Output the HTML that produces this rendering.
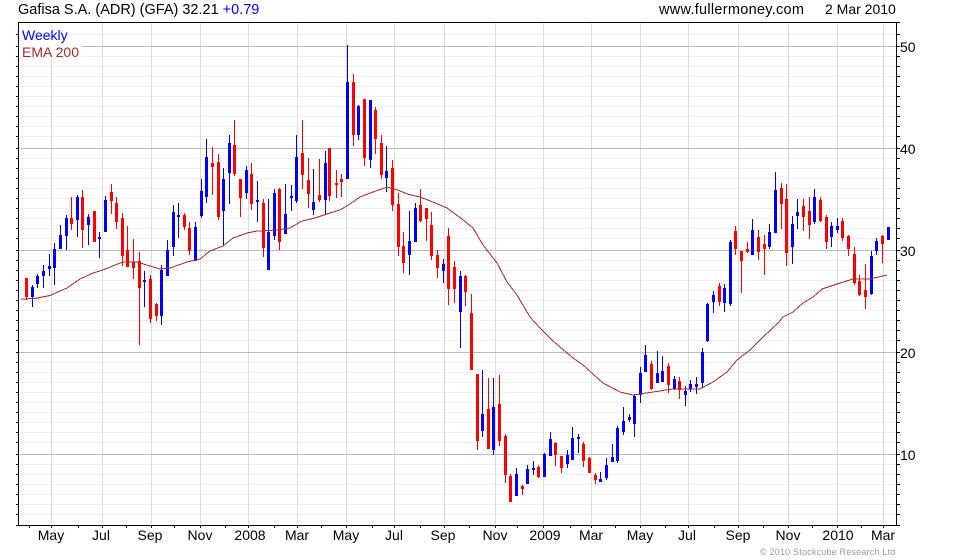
<!DOCTYPE html>
<html><head><meta charset="utf-8"><title>Gafisa S.A. (ADR) (GFA)</title>
<style>html,body{margin:0;padding:0;background:#fff;width:980px;height:560px;overflow:hidden}svg{display:block}text{font-family:"Liberation Sans",Arial,sans-serif;font-size:14px;fill:#000}</style></head>
<body>
<svg width="980" height="560" viewBox="0 0 980 560" xmlns="http://www.w3.org/2000/svg">
<g shape-rendering="crispEdges" fill="none">
<path stroke="#f0f0f0" d="M19 34.500H896M19 56.500H896M19 66.500H896M19 76.500H896M19 86.500H896M19 96.500H896M19 106.500H896M19 116.500H896M19 126.500H896M19 136.500H896M19 158.500H896M19 168.500H896M19 178.500H896M19 188.500H896M19 198.500H896M19 208.500H896M19 218.500H896M19 228.500H896M19 238.500H896M19 260.500H896M19 270.500H896M19 280.500H896M19 290.500H896M19 300.500H896M19 310.500H896M19 320.500H896M19 330.500H896M19 340.500H896M19 362.500H896M19 372.500H896M19 382.500H896M19 392.500H896M19 402.500H896M19 412.500H896M19 422.500H896M19 432.500H896M19 442.500H896M19 464.500H896M19 474.500H896M19 484.500H896M19 494.500H896M19 504.500H896M19 514.500H896"/>
<path stroke="#dcdcdc" d="M51.500 23V525M102.500 23V525M151.500 23V525M200.500 23V525M248.500 23V525M297.500 23V525M346.500 23V525M394.500 23V525M444.500 23V525M495.500 23V525M543.500 23V525M591.500 23V525M640.500 23V525M688.500 23V525M738.500 23V525M788.500 23V525M837.500 23V525M883.500 23V525"/>
<path stroke="#bbbbbb" d="M19 46.500H896M19 148.500H896M19 250.500H896M19 352.500H896M19 454.500H896"/>
<rect x="20" y="28" width="49" height="15" fill="#fff"/>
<rect x="20" y="43" width="62" height="17" fill="#fff"/>
<!-- red wicks -->
<path stroke="#ff0000" d="M26.500 278V300M71.500 197V230M82.500 190V248M111.500 184V214M116.500 197V229M122.500 213V266M127.500 226V267M133.500 239V279M139.500 252V345M150.500 275V323M156.500 303V321M184.500 213V230M189.500 222V255M212.500 147V195M218.500 154V220M234.500 120V176M240.500 179V217M251.500 163V210M263.500 199V257M279.500 188V250M302.500 120V189M308.500 158V208M319.500 159V202M329.500 148V201M336.500 170V198M341.500 174V197M353.500 74V146M364.500 99V166M375.500 107V154M381.500 135V179M392.500 160V211M398.500 193V256M403.500 232V273M420.500 189V222M426.500 208V241M431.500 212V260M437.500 250V278M448.500 228V305M454.500 261V303M465.500 275V306M471.500 294V370M477.500 374V450M488.500 378V449M499.500 375V446M505.500 434V483M510.500 474V502M522.500 485V495M538.500 465V478M555.500 442V466M561.500 456V473M583.500 442V467M589.500 457V473M595.500 473V484M651.500 361V390M668.500 363V393M679.500 377V399M719.500 283V306M735.500 226V255M741.500 251V293M747.500 242V253M758.500 230V260M764.500 235V275M781.500 183V229M786.500 184V266M803.500 199V231M809.500 197V239M820.500 197V222M826.500 215V249M842.500 218V241M848.500 235V256M854.500 247V285M859.500 275V296M865.500 264V309M882.500 235V263"/>
<!-- red bodies -->
<path stroke="#ff0000" stroke-width="3" d="M26.500 278V297M71.500 218V224M82.500 197V230M94.500 211V242M111.500 192V201M116.500 203V222M122.500 218V256M127.500 250V267M133.500 262V268M139.500 261V288M150.500 279V319M156.500 304V316M184.500 215V227M189.500 228V251M212.500 163V167M218.500 162V217M234.500 145V174M240.500 179V198M251.500 174V204M263.500 203V248M279.500 189V242M302.500 153V175M308.500 180V194M319.500 195V200M329.500 148V196M336.500 183V185M341.500 179V182M353.500 82V135M364.500 99V158M375.500 110V139M381.500 143V175M392.500 168V205M398.500 204V247M403.500 246V263M420.500 205V221M426.500 208V219M431.500 225V256M437.500 255V268M448.500 236V289M454.500 267V289M465.500 276V292M471.500 313V370M477.500 374V441M488.500 409V449M499.500 404V441M505.500 436V475M510.500 476V502M522.500 486V489M538.500 467V477M555.500 443V455M561.500 456V468M583.500 444V461M589.500 458V473M595.500 475V480M651.500 364V389M668.500 366V385M679.500 381V390M719.500 286V302M735.500 231V249M741.500 251V261M747.500 249V252M758.500 237V252M764.500 244V249M781.500 188V204M786.500 199V253M803.500 206V217M809.500 211V225M820.500 200V221M826.500 217V242M842.500 221V238M848.500 236V249M854.500 254V283M859.500 281V295M865.500 290V297M882.500 236V244"/>
<!-- blue wicks -->
<path stroke="#0000ff" d="M32.500 285V307M37.500 274V288M43.500 265V288M49.500 254V276M54.500 243V285M60.500 225V249M66.500 215V250M77.500 195V237M88.500 214V245M99.500 232V258M105.500 196V232M144.500 271V307M161.500 265V325M167.500 240V276M173.500 205V256M178.500 203V238M195.500 222V261M201.500 179V218M206.500 139V203M223.500 168V246M229.500 135V204M246.500 166V199M257.500 181V222M268.500 199V270M274.500 189V240M285.500 184V234M291.500 185V211M296.500 135V203M313.500 169V215M325.500 151V215M347.500 45V179M358.500 105V140M370.500 100V168M386.500 146V192M409.500 211V275M415.500 203V242M443.500 259V283M460.500 271V348M482.500 370V437M493.500 378V455M516.500 468V496M527.500 465V484M533.500 461V475M544.500 453V477M550.500 432V456M567.500 450V468M572.500 427V460M578.500 434V453M600.500 472V482M606.500 458V480M612.500 444V462M617.500 426V463M623.500 407V435M629.500 414V422M634.500 395V437M640.500 367V403M645.500 345V372M657.500 351V383M662.500 356V382M674.500 376V390M685.500 386V406M690.500 380V392M696.500 377V394M702.500 348V388M707.500 303V342M713.500 291V313M724.500 284V312M730.500 240V306M752.500 219V255M769.500 224V249M775.500 172V233M792.500 216V264M797.500 199V229M814.500 189V224M831.500 222V247M837.500 218V233M871.500 251V295M876.500 238V255"/>
<!-- blue bodies -->
<path stroke="#0000ff" stroke-width="3" d="M32.500 287V297M37.500 276V284M43.500 271V276M49.500 266V269M54.500 249V268M60.500 235V249M66.500 218V236M77.500 197V220M88.500 217V225M99.500 237V239M105.500 200V232M144.500 280V282M161.500 270V316M167.500 250V276M173.500 212V247M178.500 215V217M195.500 227V261M201.500 191V216M206.500 157V197M223.500 179V211M229.500 143V173M246.500 170V193M257.500 200V202M268.500 232V270M274.500 193V236M285.500 214V234M291.500 196V198M296.500 157V201M313.500 202V210M325.500 163V200M347.500 82V179M358.500 106V135M370.500 100V160M386.500 171V178M409.500 241V255M415.500 208V242M443.500 264V271M460.500 276V312M482.500 414V431M493.500 407V450M516.500 474V496M527.500 469V484M533.500 468V470M544.500 454V477M550.500 439V456M567.500 455V464M572.500 438V460M578.500 437V439M600.500 479V482M606.500 465V478M612.500 457V462M617.500 428V461M623.500 421V432M629.500 417V420M634.500 396V424M640.500 373V395M645.500 355V372M657.500 373V383M662.500 371V382M674.500 379V389M685.500 391V395M690.500 384V389M696.500 384V387M702.500 352V383M707.500 304V341M713.500 295V302M724.500 288V303M730.500 242V304M752.500 230V255M769.500 232V247M775.500 190V233M792.500 224V247M797.500 212V216M814.500 197V222M831.500 226V237M837.500 226V230M871.500 256V294M876.500 241V251M888.500 227V240"/>
<!-- axes -->
<path stroke="#000" d="M18 22.500H897M18 525.500H897M18.500 22V526M896.500 22V526"/>
<path stroke="#000" d="M16 34.500H18M16 46.500H18M16 56.500H18M16 66.500H18M16 76.500H18M16 86.500H18M16 96.500H18M16 106.500H18M16 116.500H18M16 126.500H18M16 136.500H18M16 148.500H18M16 158.500H18M16 168.500H18M16 178.500H18M16 188.500H18M16 198.500H18M16 208.500H18M16 218.500H18M16 228.500H18M16 238.500H18M16 250.500H18M16 260.500H18M16 270.500H18M16 280.500H18M16 290.500H18M16 300.500H18M16 310.500H18M16 320.500H18M16 330.500H18M16 340.500H18M16 352.500H18M16 362.500H18M16 372.500H18M16 382.500H18M16 392.500H18M16 402.500H18M16 412.500H18M16 422.500H18M16 432.500H18M16 442.500H18M16 454.500H18M16 464.500H18M16 474.500H18M16 484.500H18M16 494.500H18M16 504.500H18M16 514.500H18M16 525.500H18"/>
<path stroke="#000" d="M897 22.500H900M897 34.500H900M897 46.500H900M897 56.500H900M897 66.500H900M897 76.500H900M897 86.500H900M897 96.500H900M897 106.500H900M897 116.500H900M897 126.500H900M897 136.500H900M897 148.500H900M897 158.500H900M897 168.500H900M897 178.500H900M897 188.500H900M897 198.500H900M897 208.500H900M897 218.500H900M897 228.500H900M897 238.500H900M897 250.500H900M897 260.500H900M897 270.500H900M897 280.500H900M897 290.500H900M897 300.500H900M897 310.500H900M897 320.500H900M897 330.500H900M897 340.500H900M897 352.500H900M897 362.500H900M897 372.500H900M897 382.500H900M897 392.500H900M897 402.500H900M897 412.500H900M897 422.500H900M897 432.500H900M897 442.500H900M897 454.500H900M897 464.500H900M897 474.500H900M897 484.500H900M897 494.500H900M897 504.500H900M897 514.500H900M897 525.500H900"/>
<path stroke="#000" d="M29.500 526V528M51.500 526V528M78.500 526V528M102.500 526V528M126.500 526V528M151.500 526V528M174.500 526V528M200.500 526V528M225.500 526V528M248.500 526V528M274.500 526V528M297.500 526V528M321.500 526V528M346.500 526V528M372.500 526V528M394.500 526V528M420.500 526V528M444.500 526V528M469.500 526V528M495.500 526V528M517.500 526V528M543.500 526V528M570.500 526V528M591.500 526V528M615.500 526V528M640.500 526V528M665.500 526V528M688.500 526V528M714.500 526V528M738.500 526V528M763.500 526V528M788.500 526V528M812.500 526V528M837.500 526V528M861.500 526V528M883.500 526V528"/>
</g>
<!-- EMA -->
<polyline fill="none" stroke="#a52a2a" stroke-width="1" shape-rendering="crispEdges" points="21,299 35,298.500 50,295.500 60,291 67,288 80,279 93,273 103,270 115,265 123,262 137,262 150,266 160,269 170,268 187,262 200,259 210,251 223,246 233,238 247,233 257,231 277,230 290,228 302,221 315,218 330,213 340,210 350,204 360,197 373,192 387,187 398,190 407,194 420,197 433,202 447,208 462,219 473,228 483,245 497,263 507,282 517,295 530,317 540,328 553,341 573,358 583,365 603,383 620,392 633,395 653,392 673,389 700,389 713,382 727,372 737,360 750,350 763,337 778,323 783,317 793,312 803,303 813,297 822,289 840,283 853,279 870,279 887,275"/>
<!-- header -->
<text x="18" y="14" style="font-size:14.500px">Gafisa S.A. (ADR) (GFA) 32.21 <tspan style="fill:#0000ff">+0.79</tspan></text>
<text x="659" y="14" style="font-size:14.500px" textLength="145">www.fullermoney.com</text>
<text x="825" y="14">2 Mar 2010</text>
<text x="22" y="40" style="fill:#0000ff">Weekly</text>
<text x="22" y="57" style="fill:#a52a2a" textLength="57">EMA 200</text>
<!-- right labels -->
<text x="900" y="52">50</text>
<text x="900" y="154">40</text>
<text x="900" y="256">30</text>
<text x="900" y="358">20</text>
<text x="900" y="460">10</text>
<!-- bottom labels -->
<g text-anchor="middle">
<text x="51" y="540">May</text><text x="101" y="540">Jul</text><text x="150" y="540">Sep</text><text x="200" y="540">Nov</text><text x="250" y="540">2008</text><text x="297" y="540">Mar</text><text x="346" y="540">May</text><text x="394" y="540">Jul</text><text x="443" y="540">Sep</text><text x="495" y="540">Nov</text><text x="545" y="540">2009</text><text x="591" y="540">Mar</text><text x="640" y="540">May</text><text x="687" y="540">Jul</text><text x="738" y="540">Sep</text><text x="788" y="540">Nov</text><text x="838" y="540">2010</text><text x="883" y="540">Mar</text>
</g>
<text x="760" y="555" style="font-size:9px;fill:#999;letter-spacing:.2px">© 2010 Stockcube Research Ltd</text>
</svg>
</body></html>
